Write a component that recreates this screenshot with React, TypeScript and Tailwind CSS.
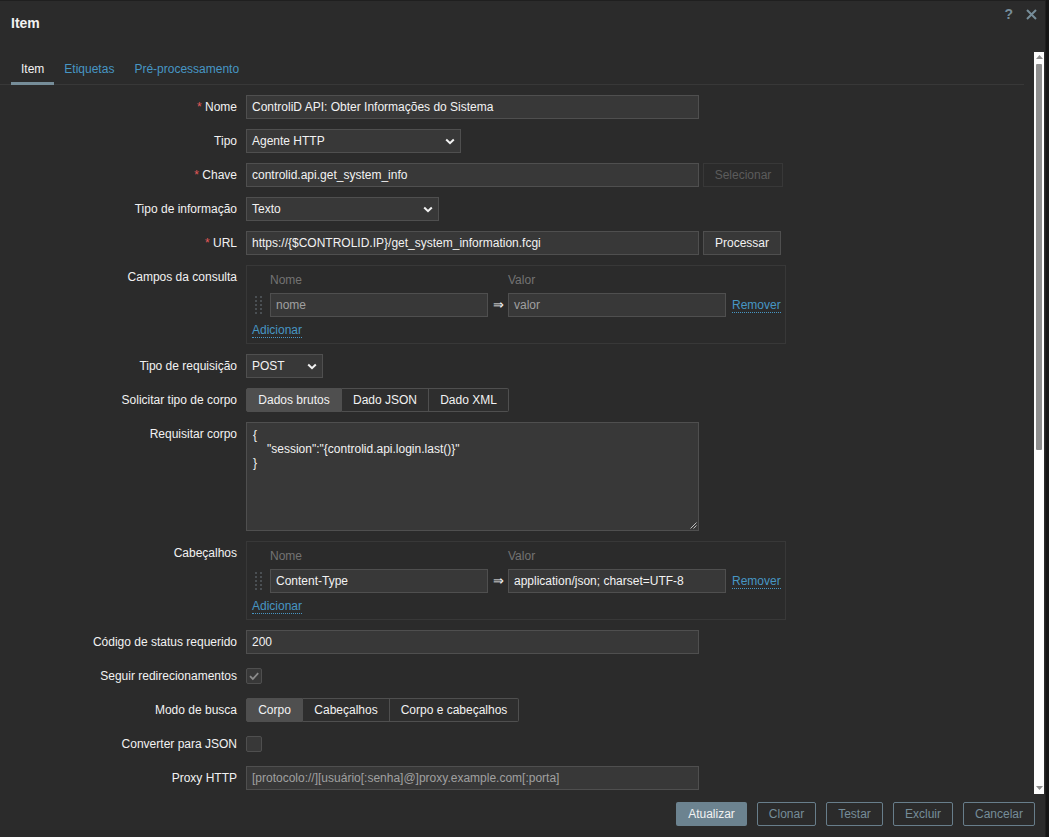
import React from "react";

const FONT = { fontFamily: '"Liberation Sans", Arial, Helvetica, sans-serif' };

function Chevron() {
  return (
    <svg width="10" height="7" viewBox="0 0 10 7" className="shrink-0">
      <path d="M1.2 1.5L5 5.2L8.8 1.5" fill="none" stroke="#f2f2f2" strokeWidth="2" />
    </svg>
  );
}

function Label({ children, req }: { children: React.ReactNode; req?: boolean }) {
  return (
    <div className="w-[237px] shrink-0 text-right leading-[24px] text-[#f2f2f2] whitespace-nowrap">
      {req && <span className="text-[#e45959]">* </span>}
      {children}
    </div>
  );
}

function Row({ label, req, children }: { label: string; req?: boolean; children: React.ReactNode }) {
  return (
    <div className="flex gap-[9px] items-start">
      <Label req={req}>{label}</Label>
      <div className="flex items-start">{children}</div>
    </div>
  );
}

function Input({ value, w, placeholder }: { value?: string; w: string; placeholder?: string }) {
  return (
    <div
      className={`${w} h-[24px] bg-[#383838] border border-[#4f4f4f] px-[5px] flex items-center whitespace-nowrap overflow-hidden ${
        value ? "text-[#f2f2f2]" : "text-[#a0a0a0]"
      }`}
    >
      {value || placeholder}
    </div>
  );
}

function Select({ value, w }: { value: string; w: string }) {
  return (
    <div
      className={`${w} h-[24px] bg-[#383838] border border-[#4f4f4f] pl-[5px] pr-[5px] flex items-center justify-between text-[#f2f2f2]`}
    >
      <span>{value}</span>
      <Chevron />
    </div>
  );
}

function LinkText({ children }: { children: React.ReactNode }) {
  return (
    <span className="text-[#4796c4] leading-[14px] border-b border-dotted border-[#4796c4]">{children}</span>
  );
}

function Handle() {
  return (
    <svg width="7" height="18" viewBox="0 0 7 18">
      {[0, 4, 8, 12, 16].map((y) => (
        <g key={y}>
          <rect x="0" y={y} width="2" height="2" fill="#4a4f53" />
          <rect x="5" y={y} width="2" height="2" fill="#4a4f53" />
        </g>
      ))}
    </svg>
  );
}

function KVBox({ name, value, placeholder }: { name?: string; value?: string; placeholder?: boolean }) {
  return (
    <div className="w-[540px] h-[79px] border border-[#383838] flex flex-col">
      <div className="h-[27px] flex items-center text-[#737373]">
        <span className="ml-[23px] w-[238px]">Nome</span>
        <span>Valor</span>
      </div>
      <div className="h-[24px] flex items-center">
        <div className="w-[23px] flex justify-center">
          <Handle />
        </div>
        <Input w="w-[218px]" value={placeholder ? undefined : name} placeholder={placeholder ? "nome" : undefined} />
        <div className="w-[20px] text-center text-[#f2f2f2] text-[13px]">⇒</div>
        <Input w="w-[218px]" value={placeholder ? undefined : value} placeholder={placeholder ? "valor" : undefined} />
        <div className="ml-[6px]">
          <LinkText>Remover</LinkText>
        </div>
      </div>
      <div className="h-[26px] flex items-center pl-[5px]">
        <LinkText>Adicionar</LinkText>
      </div>
    </div>
  );
}

function Segmented({ items, widths }: { items: string[]; widths: string[] }) {
  return (
    <div className="flex h-[24px]">
      {items.map((t, i) => (
        <div
          key={t}
          className={`${widths[i]} flex items-center justify-center border-y border-[#4f4f4f] ${
            i === 0 ? "bg-[#4f4f4f] border-l rounded-l-[2px]" : "bg-[#2e2e2e]"
          } ${i === items.length - 1 ? "rounded-r-[2px] border-r" : "border-r"} text-[#f2f2f2]`}
        >
          {t}
        </div>
      ))}
    </div>
  );
}

function Checkbox({ checked }: { checked?: boolean }) {
  return (
    <div className="mt-[4px] w-[16px] h-[16px] bg-[#383838] border border-[#4f4f4f] rounded-[2px] flex items-center justify-center">
      {checked && (
        <svg width="12" height="12" viewBox="0 0 12 12">
          <path d="M2 6.2L4.8 9L10.2 3.2" fill="none" stroke="#8c8c8c" strokeWidth="1.8" />
        </svg>
      )}
    </div>
  );
}

export default function App() {
  return (
    <div className="w-[1049px] h-[837px] bg-[#151515] overflow-hidden" style={FONT}>
      <div className="w-[1046px] h-[837px] bg-[#2b2b2b] border-t border-r border-[#1f1f1f] flex flex-col text-[12px] text-[#f2f2f2]">
        {/* header */}
        <div className="h-[51px] shrink-0 flex items-start justify-between">
          <div className="ml-[11px] mt-[14px] text-[14px] font-bold leading-[17px] text-[#f2f2f2]">Item</div>
          <div className="flex items-center mt-[5px] mr-[8px]">
            <span className="text-[14px] font-bold leading-[17px] text-[#768d99]">?</span>
            <svg width="11" height="11" viewBox="0 0 11 11" className="ml-[13px]">
              <path d="M1 1L10 10M10 1L1 10" stroke="#768d99" strokeWidth="2" />
            </svg>
          </div>
        </div>

        {/* body */}
        <div className="flex h-[742px] shrink-0">
          <div className="flex-1 overflow-hidden">
            <div className="mr-[10px] h-[33px] flex items-start border-b border-[#383838] pl-[11px]">
              <div className="relative h-[32px] px-[10px] pt-[10px] leading-[14px] text-[#f2f2f2]">
                Item
                <span className="absolute left-0 right-0 bottom-[-1px] h-[3px] bg-[#768d99]" />
              </div>
              <div className="h-[32px] px-[10px] pt-[10px] leading-[14px] text-[#4796c4]">Etiquetas</div>
              <div className="h-[32px] px-[10px] pt-[10px] leading-[14px] text-[#4796c4]">Pré-processamento</div>
            </div>

            <div className="pt-[10px] flex flex-col gap-[10px]">
              <Row label="Nome" req>
                <Input w="w-[453px]" value="ControliD API: Obter Informações do Sistema" />
              </Row>
              <Row label="Tipo">
                <Select w="w-[215px]" value="Agente HTTP" />
              </Row>
              <Row label="Chave" req>
                <Input w="w-[453px]" value="controlid.api.get_system_info" />
                <div className="ml-[4px] w-[80px] h-[24px] border border-[#383838] flex items-center justify-center text-[#5c5c5c]">
                  Selecionar
                </div>
              </Row>
              <Row label="Tipo de informação">
                <Select w="w-[193px]" value="Texto" />
              </Row>
              <Row label="URL" req>
                <Input w="w-[453px]" value="https://{$CONTROLID.IP}/get_system_information.fcgi" />
                <div className="ml-[4px] w-[78px] h-[24px] bg-[#383838] border border-[#4f4f4f] flex items-center justify-center text-[#f2f2f2]">
                  Processar
                </div>
              </Row>
              <Row label="Campos da consulta">
                <KVBox placeholder />
              </Row>
              <Row label="Tipo de requisição">
                <Select w="w-[77px]" value="POST" />
              </Row>
              <Row label="Solicitar tipo de corpo">
                <Segmented items={["Dados brutos", "Dado JSON", "Dado XML"]} widths={["w-[96px]", "w-[87px]", "w-[80px]"]} />
              </Row>
              <Row label="Requisitar corpo">
                <div className="relative w-[453px] h-[109px] bg-[#383838] border border-[#4f4f4f] pl-[6px] pt-[5px] leading-[14px] text-[#f2f2f2]">
                  <div>{"{"}</div>
                  <div className="ml-[14px]">{'"session":"{controlid.api.login.last()}"'}</div>
                  <div>{"}"}</div>
                  <svg width="7" height="7" viewBox="0 0 7 7" className="absolute right-[1px] bottom-[1px]">
                    <path d="M6.5 0.5L0.5 6.5M6.5 3.5L3.5 6.5" stroke="#bdbdbd" strokeWidth="1" />
                  </svg>
                </div>
              </Row>
              <Row label="Cabeçalhos">
                <KVBox name="Content-Type" value="application/json; charset=UTF-8" />
              </Row>
              <Row label="Código de status requerido">
                <Input w="w-[453px]" value="200" />
              </Row>
              <Row label="Seguir redirecionamentos">
                <Checkbox checked />
              </Row>
              <Row label="Modo de busca">
                <Segmented items={["Corpo", "Cabeçalhos", "Corpo e cabeçalhos"]} widths={["w-[57px]", "w-[87px]", "w-[129px]"]} />
              </Row>
              <Row label="Converter para JSON">
                <Checkbox />
              </Row>
              <Row label="Proxy HTTP">
                <Input w="w-[453px]" placeholder="[protocolo://][usuário[:senha]@]proxy.example.com[:porta]" />
              </Row>
            </div>
          </div>

          {/* scrollbar */}
          <div className="w-[10px] mr-[1px] bg-[#fcfcfc] flex flex-col items-center">
            <svg width="7" height="4" viewBox="0 0 7 4" className="mt-[3px]">
              <path d="M0 4L3.5 0L7 4Z" fill="#8f8f8f" />
            </svg>
            <div className="mt-[5px] w-[6px] h-[386px] bg-[#8f8f8f] rounded-[1px]" />
            <div className="flex-1" />
            <svg width="7" height="4" viewBox="0 0 7 4" className="mb-[4px]">
              <path d="M0 0L3.5 4L7 0Z" fill="#8f8f8f" />
            </svg>
          </div>
        </div>

        {/* footer */}
        <div className="flex-1 flex justify-end items-start pt-[8px] pr-[10px] gap-[10px]">
          <div className="w-[71px] h-[24px] bg-[#6c8390] rounded-[2px] flex items-center justify-center text-[#f2f2f2]">
            Atualizar
          </div>
          {[
            ["Clonar", "w-[59px]"],
            ["Testar", "w-[57px]"],
            ["Excluir", "w-[60px]"],
            ["Cancelar", "w-[72px]"],
          ].map(([t, w]) => (
            <div
              key={t}
              className={`${w} h-[24px] border border-[#687e8b] rounded-[2px] flex items-center justify-center text-[#768d99]`}
            >
              {t}
            </div>
          ))}
        </div>
      </div>
    </div>
  );
}
